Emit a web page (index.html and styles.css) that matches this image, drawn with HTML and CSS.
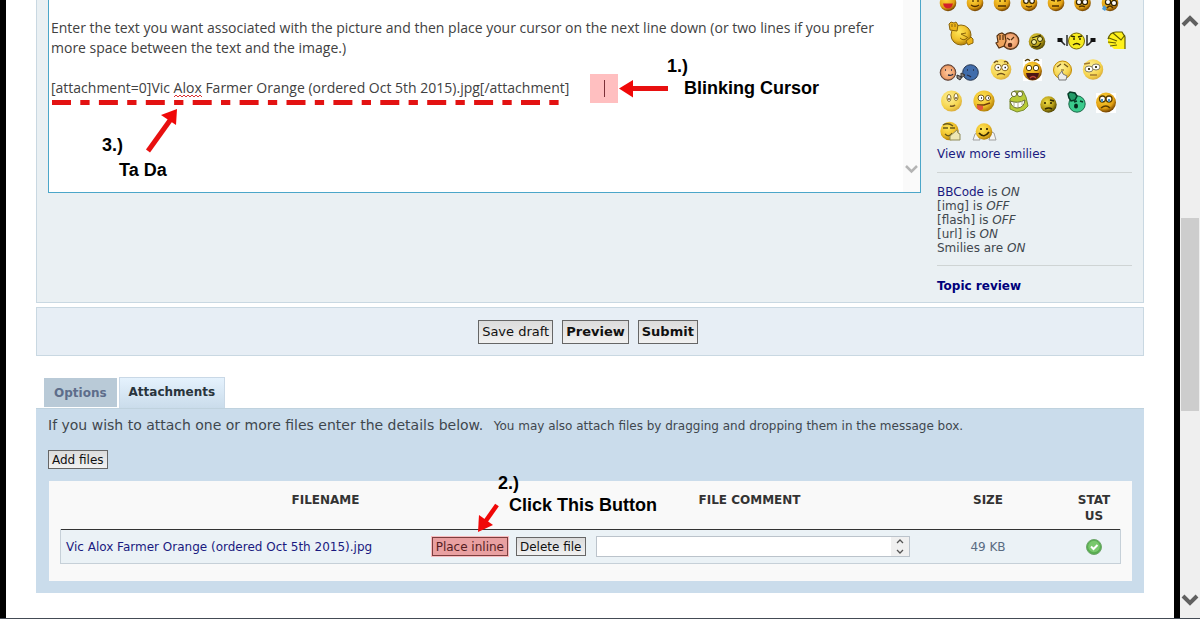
FILE: index.html
```html
<!DOCTYPE html>
<html lang="en">
<head>
<meta charset="utf-8">
<title>Post a reply</title>
<link rel="stylesheet" href="styles.css">
</head>
<body>
<div class="window">
<main class="page">
  <section class="panel composer">
    <div class="editor">
      <textarea class="message" aria-label="Message" spellcheck="false">

Enter the text you want associated with the picture and then place your cursor on the next line down (or two lines if you prefer
more space between the text and the image.)

[attachment=0]Vic Alox Farmer Orange (ordered Oct 5th 2015).jpg[/attachment]</textarea>
      <div class="editor-scroll"><svg width="13" height="9" viewBox="0 0 13 9"><path d="M1 1l5.500 5.500L12 1" fill="none" stroke="#b4b4b4" stroke-width="2.500"/></svg></div>
      <svg class="marks" width="640" height="160" viewBox="48 0 640 160" aria-hidden="true">
        <path d="M174 97l2-2 2 2 2-2 2 2 2-2 2 2 2-2 2 2 2-2 2 2 2-2 2 2 2-2 2 2" fill="none" stroke="#d33" stroke-width="1"/>
        <path d="M52 102.500H559" stroke="#e31212" stroke-width="5" stroke-dasharray="19 9.300 9.300 9.300"/>
        <path d="M148 151L171 119" stroke="#e81010" stroke-width="5"/><path d="M177 109L161 115L176 125Z" fill="#f00808"/>
        <rect x="590" y="74" width="28" height="29" fill="#ffbfc0"/><path d="M604.500 80v17" stroke="#7b3038" stroke-width="1"/>
        <path d="M630 88.500h38" stroke="#e81010" stroke-width="5"/><path d="M619 88.500L633 80V97.500Z" fill="#f00808"/>
      </svg>
      <span class="note note-one">1.)</span><span class="note note-cursor">Blinking Cursor</span>
      <span class="note note-three">3.)</span><span class="note note-tada">Ta Da</span>
    </div>
    <aside class="sidebar">
      <svg class="smilies" width="195" height="146" viewBox="937 0 195 146" role="img" aria-label="Smilies">
        <defs>
          <radialGradient id="gold" cx=".4" cy=".35" r=".7"><stop offset="0" stop-color="#ffe75a"/><stop offset=".6" stop-color="#efc02b"/><stop offset="1" stop-color="#a67300"/></radialGradient>
          <radialGradient id="amber" cx=".4" cy=".3" r=".7"><stop offset="0" stop-color="#ffd83d"/><stop offset=".7" stop-color="#e2a012"/><stop offset="1" stop-color="#704000"/></radialGradient>
          <radialGradient id="pale" cx=".4" cy=".35" r=".7"><stop offset="0" stop-color="#fff29a"/><stop offset=".7" stop-color="#f5d34b"/><stop offset="1" stop-color="#d4a438"/></radialGradient>
          <radialGradient id="olive" cx=".4" cy=".35" r=".7"><stop offset="0" stop-color="#f0df48"/><stop offset=".6" stop-color="#b49a14"/><stop offset="1" stop-color="#403800"/></radialGradient>
          <radialGradient id="peach"><stop offset="0" stop-color="#ffc79c"/><stop offset=".8" stop-color="#efa06b"/><stop offset="1" stop-color="#875338"/></radialGradient>
        </defs>
        <g fill="url(#amber)"><circle cx="948" cy="3" r="8.300"/><circle cx="975" cy="3" r="8.300"/><circle cx="1002" cy="3" r="8.300"/><circle cx="1029" cy="3" r="8.300"/><circle cx="1056" cy="3" r="8.300"/><circle cx="1082.500" cy="3" r="8.300"/><circle cx="1110" cy="3" r="8.300"/></g>
        <path d="M943 3.500h10q-1 5-5 5t-5-5z" fill="#d3202a"/>
        <g fill="none" stroke="#503000" stroke-width="1.300"><path d="M971 5q4 3 8 0M998 6h8M1026 6q3 2 6 0M1052 6h7M1079 7q3-2 6 0M973 0v2M978 0v2M1000 0v2M1005 0v2M1051 0l4 1M1057 1l4-1"/></g>
        <g fill="#fff" stroke="#332200" stroke-width="1.200"><circle cx="1026" cy="1" r="2.300"/><circle cx="1032" cy="1" r="2.300"/><circle cx="1079" cy="2" r="2.600"/><circle cx="1085" cy="2" r="2.600"/><circle cx="1108" cy="2" r="2.600"/><circle cx="1114" cy="3" r="2.600"/></g>
        <path d="M1104 5l3 3-2 3-3-2z" fill="#4e9bd7"/><path d="M1107 8q3-4 6 0" fill="none" stroke="#543000" stroke-width="1.500"/>

        <g stroke="#8b650c" stroke-width="1"><circle cx="961" cy="35" r="10" fill="url(#gold)"/><path d="M950 30l-1-6 2-2 3 1 2-1 2 3-1 6zM966 41l5-4 2 2v4l-5 2z" fill="#edb419"/><path d="M952 24v3M955 24v3M966 33l-5 1 6 3M960 38q4 4 8-1" fill="none"/></g>
        <g stroke="#553010" stroke-width="1.200"><circle cx="1010.500" cy="41" r="8.300" fill="url(#peach)"/><path d="M999 48l-3-5 2-1-1-6 2-2 3-1 3 2 1 6-2 5z" fill="#eea35c"/><path d="M1000 35v5M1003 35v5M1007 38l3 2M1014 37l-3 3" fill="none"/><circle cx="1010" cy="45" r="1.700" fill="#802020"/></g>
        <circle cx="1037" cy="41.500" r="8.300" fill="url(#olive)"/><g fill="#f4ee9c" stroke="#302900"><circle cx="1034" cy="42" r="2.500"/><circle cx="1040" cy="39" r="2.500"/></g><path d="M1032 46q6 3 9-3M1032 38l9-3" fill="none" stroke="#302900" stroke-width="1.300"/>
        <path d="M1058 40h2l5 5M1095 40h-2l-5 5M1067 35v11M1087 35v11" fill="none" stroke="#292929" stroke-width="1.500"/><path d="M1057.500 38h5v4h-5zM1090.500 38h5v4h-5z" fill="#111"/><circle cx="1076.500" cy="41" r="8" fill="#f6ec20" stroke="#776900"/><path d="M1073 39h2M1079 39h2M1073 45q4-3 7 0M1071 36l4 1M1078 37l4-1" fill="none" stroke="#302900" stroke-width="1.500"/>
        <path d="M1108 43V38q2-6 8-6h6l3 5v12h-11l-6-6z" fill="#fff11b"/><path d="M1108 39q2-7 8-7h6l3 5v12M1113 33l8 7 4-5M1109 38l8 3M1108 42l8 1M1110 46l7-1" fill="none" stroke="#625e00" stroke-width="1.200"/>

        <circle cx="948" cy="72.500" r="7.800" fill="url(#peach)" stroke="#614338"/><circle cx="970.500" cy="72.500" r="7.800" fill="#416dab" stroke="#26354e"/><path d="M957 75l5 2-2 3-3-2zM961 73l4 2-4 3z" fill="#8f8581" stroke="#333"/><path d="M948 75q4 1 5-1M945 70h1M951 70h1M967 70h1M973 70h1M967 75q3 1 4 2" fill="none" stroke="#292e44" stroke-width="1.300"/>
        <circle cx="1001" cy="69.500" r="10.300" fill="url(#pale)"/><g fill="#fff" stroke="#8a6719"><circle cx="998" cy="67.500" r="3.300"/><circle cx="1005" cy="67.500" r="3.300"/></g><path d="M997 75q4-3 8 0M994 63q2-3 4-1M1004 62q3-2 4 2" fill="none" stroke="#70501a" stroke-width="1.300"/><path d="M997.500 67.500h1.500M1004.500 67.500h1.500" stroke="#222" stroke-width="1.600"/>
        <path d="M1023 59h19v22h-19z" fill="#fff"/><circle cx="1032.500" cy="71" r="9.500" fill="url(#amber)"/><path d="M1025 61q3-3 5 0M1034 61q3-3 5 0" fill="none" stroke="#543c00" stroke-width="1.300"/><g fill="#fff" stroke="#543c00"><circle cx="1029" cy="68" r="2.700"/><circle cx="1036" cy="68" r="2.700"/></g><path d="M1026 73h13q-1 7-6.500 7t-6.500-7z" fill="#4c1615"/><path d="M1030 78q3-3 6 0" stroke="#c34836" stroke-width="1.500" fill="none"/>
        <circle cx="1062.500" cy="70" r="9" fill="url(#pale)" stroke="#c48d00"/><path d="M1057 67l4-3M1068 67l-4-3M1061 70h3" stroke="#72571a" stroke-width="1.200"/><path d="M1059 80l-1-4 4-5 1 3 4 2-1 4z" fill="#ededed" stroke="#777"/>
        <circle cx="1093" cy="69.500" r="10.200" fill="url(#pale)"/><g fill="#fff" stroke="#8a8060"><ellipse cx="1089" cy="69" rx="4" ry="3"/><ellipse cx="1096" cy="67" rx="4" ry="3"/></g><path d="M1090 75h7M1084 64l6-1" stroke="#a27932" stroke-width="1.300"/><path d="M1088 69h2M1095 67h2" stroke="#443f22" stroke-width="2"/>

        <circle cx="951.500" cy="101" r="10.500" fill="url(#pale)"/><g fill="#fff" stroke="#897020"><ellipse cx="949" cy="98" rx="2" ry="3.500"/><ellipse cx="956" cy="97" rx="2" ry="3.500"/></g><path d="M950 106q3 1 5-1M949 98v2M956 97v2" fill="none" stroke="#765724" stroke-width="1.500"/>
        <circle cx="984" cy="101" r="10.600" fill="url(#gold)"/><g fill="#fff" stroke="#785818"><circle cx="981" cy="98" r="3"/><circle cx="988" cy="98" r="2.500"/></g><path d="M977 105h7l6-2" fill="none" stroke="#6d3f0a" stroke-width="1.500"/><path d="M977 105l6 1v3q-4 3-6-1z" fill="#e4563c"/><path d="M981 98h1M988 98h1" stroke="#222" stroke-width="1.500"/>
        <path d="M1010 99l3-3 1-5h9l3 6 2 9-4 4-7 2-7-3z" fill="#b8cb37" stroke="#7b8d2d"/><g fill="#fff" stroke="#686d35"><circle cx="1014" cy="94" r="2.600"/><circle cx="1020" cy="94" r="2.600"/><path d="M1010 101q8 3 15-1-1 8-8 8-5 0-7-7z"/></g><path d="M1014 102v5M1018 102v5M1022 101v4" stroke="#adb28c"/>
        <circle cx="1048.500" cy="104.500" r="8.200" fill="url(#olive)"/><path d="M1045 102v2M1051 102v2M1045 109q4-2 7 0M1050 100l4 1" fill="none" stroke="#302900" stroke-width="1.600"/>
        <circle cx="1077" cy="104" r="8.200" fill="#3acb8c" stroke="#196848"/><path d="M1069 98l-1-4 2-2 5 1 2 3-2 4-4 1z" fill="#239b68" stroke="#063c27" stroke-width="1.500"/><path d="M1074 102l3-1M1080 101l3 1" stroke="#073c25" stroke-width="1.500"/><ellipse cx="1076" cy="106" rx="2" ry="2.500" fill="#07261a"/>
        <path d="M1096 93h20v20h-20z" fill="#fff"/><circle cx="1106" cy="102.500" r="10" fill="url(#amber)"/><g fill="#fff" stroke="#593d00" stroke-width="1.300"><circle cx="1102.500" cy="99" r="3"/><circle cx="1109" cy="99" r="3"/></g><path d="M1102 99v3M1109 99v3" stroke="#468ebe" stroke-width="2"/><path d="M1101 108q5-4 9 0" fill="none" stroke="#593d00" stroke-width="1.500"/>

        <circle cx="949.500" cy="131" r="9.200" fill="url(#gold)"/><path d="M943 128h5M950 128h5M945 134q4 4 7-1M943 125q5-3 10 1" fill="none" stroke="#69591a" stroke-width="1.300"/><path d="M950 140v-4l7-6 1 3 2 1v6z" fill="#eee7b4" stroke="#8f8b5b"/>
        <path d="M973 140l2-6 3-2 2 8zM996 140l-2-7-3-1-2 8z" fill="#f4f4f4" stroke="#9f9f9f"/><circle cx="984" cy="131.500" r="8.300" fill="url(#gold)"/><path d="M981 128v2M987 128v2M979 133q5 6 10-1" fill="none" stroke="#362800" stroke-width="1.700"/>
      </svg>
      <a class="more" href="#smilies">View more smilies</a>
      <hr>
      <p class="status"><a href="#bbcode">BBCode</a> is <em>ON</em><br>[img] is <em>OFF</em><br>[flash] is <em>OFF</em><br>[url] is <em>ON</em><br>Smilies are <em>ON</em></p>
      <hr>
      <a class="review" href="#review">Topic review</a>
    </aside>
  </section>

  <section class="panel actions">
    <button type="button">Save draft</button>
    <button type="button" class="strong">Preview</button>
    <button type="button" class="strong">Submit</button>
  </section>

  <nav class="tabs"><a class="tab" href="#options">Options</a><a class="tab active" href="#attachments">Attachments</a></nav>

  <section class="attachments">
    <p class="intro">If you wish to attach one or more files enter the details below. <small>You may also attach files by dragging and dropping them in the message box.</small></p>
    <button type="button" class="small">Add files</button>
    <div class="files">
      <table>
        <thead><tr><th class="col-name">Filename</th><th class="col-comment">File comment</th><th class="col-size">Size</th><th class="col-status">Status</th></tr></thead>
        <tbody><tr>
          <td><div class="file"><a href="#file">Vic Alox Farmer Orange (ordered Oct 5th 2015).jpg</a><button type="button" class="small marked">Place inline</button><button type="button" class="small">Delete file</button></div></td>
          <td><div class="comment"><textarea rows="1" aria-label="File comment"></textarea><svg width="18" height="19" viewBox="0 0 18 19"><path d="M0 0h18v19H0z" fill="#f0f0f0"/><path d="M6 6l3-3 3 3M6 13l3 3 3-3" fill="none" stroke="#555" stroke-width="1.300"/></svg></div></td>
          <td class="size">49 KB</td>
          <td class="state"><svg width="16" height="16" viewBox="0 0 16 16" role="img" aria-label="Uploaded"><circle cx="8" cy="8" r="7.500" fill="#58ad50" stroke="#6fa76c"/><circle cx="8" cy="7.500" r="5.800" fill="#79c86d"/><path d="M5 7.500l2.500 2.500 4-4" fill="none" stroke="#fff" stroke-width="2"/></svg></td>
        </tr></tbody>
      </table>
      <svg class="pointer" width="24" height="32" viewBox="476 502 24 32" aria-hidden="true"><path d="M497 505L485 522" stroke="#f00808" stroke-width="4.500"/><path d="M478 532L479 515L493 525Z" fill="#f00808"/></svg>
      <span class="note note-two">2.)</span><span class="note note-click">Click This Button</span>
    </div>
  </section>
</main>
<div class="scrollbar">
  <svg width="20" height="30" viewBox="0 0 20 30"><path d="M3 25l7-7 7 7" fill="none" stroke="#606060" stroke-width="4"/></svg>
  <div class="thumb"></div>
  <svg class="down" width="20" height="30" viewBox="0 0 20 30"><path d="M3 8l7 7 7-7" fill="none" stroke="#606060" stroke-width="4"/></svg>
</div>
</div>
</body>
</html>
```
FILE: styles.css
```css
* { box-sizing: border-box; }
body {
  margin: 0;
  background: #fff;
  color: #3f474e;
  font-family: "DejaVu Sans", Verdana, sans-serif;
  font-size: 12px;
}
a { color: #1a1a80; text-decoration: none; }
svg { display: block; }

.window { display: flex; height: 100vh; overflow: hidden; border-bottom: 1px solid #444b55; }
.page {
  flex: 1;
  min-width: 0;
  padding: 0 30px;
  border-left: 6px solid #000;
  border-right: 6px solid #000;
}
.panel { border: 1px solid #c9d8e2; }

.composer {
  display: flex;
  gap: 16px;
  height: 303px;
  padding: 0 11px;
  border-top: 0;
  background: #eaf0f3;
}
.editor { position: relative; display: flex; flex: 1; height: 193px; border: 1px solid #4ba6c9; border-top: 0; background: #fff; }
.message {
  flex: 1;
  min-width: 0;
  margin-top: -2px;
  padding: 0 2px;
  border: 0;
  outline: 0;
  resize: none;
  overflow: hidden;
  white-space: pre;
  background: transparent;
  color: #414141;
  font: 14px/20px "Open Sans", "Trebuchet MS", sans-serif;
}
.editor-scroll { display: flex; align-items: flex-end; justify-content: center; width: 17px; padding-bottom: 18px; background: #fafafa; }
.marks { position: absolute; top: 0; left: -1px; }

.note { position: absolute; color: #000; font: bold 18px/20px "Liberation Sans", Arial, sans-serif; white-space: nowrap; }
.note-one { top: 56px; left: 618px; }
.note-cursor { top: 78px; left: 635px; }
.note-three { top: 135px; left: 53px; }
.note-tada { top: 160px; left: 70px; }
.note-two { top: -8px; left: 449px; }
.note-click { top: 14px; left: 460px; }

.sidebar { width: 195px; line-height: 14px; }
.more, .review { display: block; line-height: 16px; }
.review { color: #00007b; font-weight: bold; }
.sidebar hr { height: 1px; margin: 10px 0 12px; border: 0; background: #cfd4d4; }
.status { margin: 0; }

.actions { display: flex; align-items: center; justify-content: center; gap: 9px; height: 49px; margin-top: 4px; padding-right: 4px; background: #e7eef5; }
button {
  height: 24px;
  padding: 0 3px;
  border: 1px solid #666;
  border-radius: 0;
  background: linear-gradient(#dcdcdc, #f1f1f1);
  color: #111;
  font: 13px "DejaVu Sans", Verdana, sans-serif;
  white-space: nowrap;
}
.strong { font-weight: bold; }
.small { height: 19px; font-size: 12px; }

.tabs { display: flex; align-items: flex-end; gap: 2px; height: 31px; margin-top: 21px; padding-left: 8px; font-size: 12px; font-weight: bold; }
.tab { height: 29px; margin-bottom: 1px; padding: 0 10px; background: #b9cad7; color: #5d6d8a; line-height: 31px; }
.active { height: 31px; margin: 0; padding: 0 9px; border: 1px solid #c9d8e6; border-bottom: 0; background: linear-gradient(#e5f2fd, #cadceb); color: #29343c; line-height: 28px; }

.attachments { padding: 8px 12px 12px; border-top: 1px solid #bfd2de; background: #cadceb; }
.intro { margin: 0 0 15px; font-size: 14px; line-height: 17px; white-space: nowrap; }
.intro small { margin-left: 6px; font-size: 12px; }
.files { position: relative; margin: 12px 0 0 1px; padding: 6px 11px 17px; background: #f9f9f9; }
table { width: 100%; border-collapse: collapse; table-layout: fixed; }
th { height: 42px; padding: 5px 8px; color: #333; font-size: 12px; line-height: 16px; text-align: center; text-transform: uppercase; vertical-align: top; word-break: break-all; }
.col-name { width: 50%; }
.col-comment { width: 30%; }
.col-size { width: 15%; }
.col-status { width: 5%; }
tbody tr { height: 34px; border: 1px solid #c6d0d8; border-top-color: #333; background: #ebf2f6; }
td { padding: 0 5px; }
.file { display: flex; align-items: center; gap: 8px; }
.file a { flex: 1; white-space: nowrap; }
.marked { outline: 1px solid #f9bcc0; background: #e9a0a1; border-color: #7c3e3e; color: #551d22; }
.comment { display: flex; height: 21px; margin-right: -6px; border: 1px solid #bbc3cb; background: #fff; }
.comment textarea { flex: 1; min-width: 0; padding: 0; border: 0; outline: 0; resize: none; overflow: hidden; background: transparent; }
.size { color: #596b82; text-align: center; }
.state svg { margin: 0 auto; }
.pointer { position: absolute; top: 21px; left: 427px; }

.scrollbar { display: flex; flex-direction: column; width: 20px; background: #efefef; }
.thumb { height: 193px; margin: 188px 1px 0 1px; background: #cdcdcd; }
.down { margin-top: auto; }
```
